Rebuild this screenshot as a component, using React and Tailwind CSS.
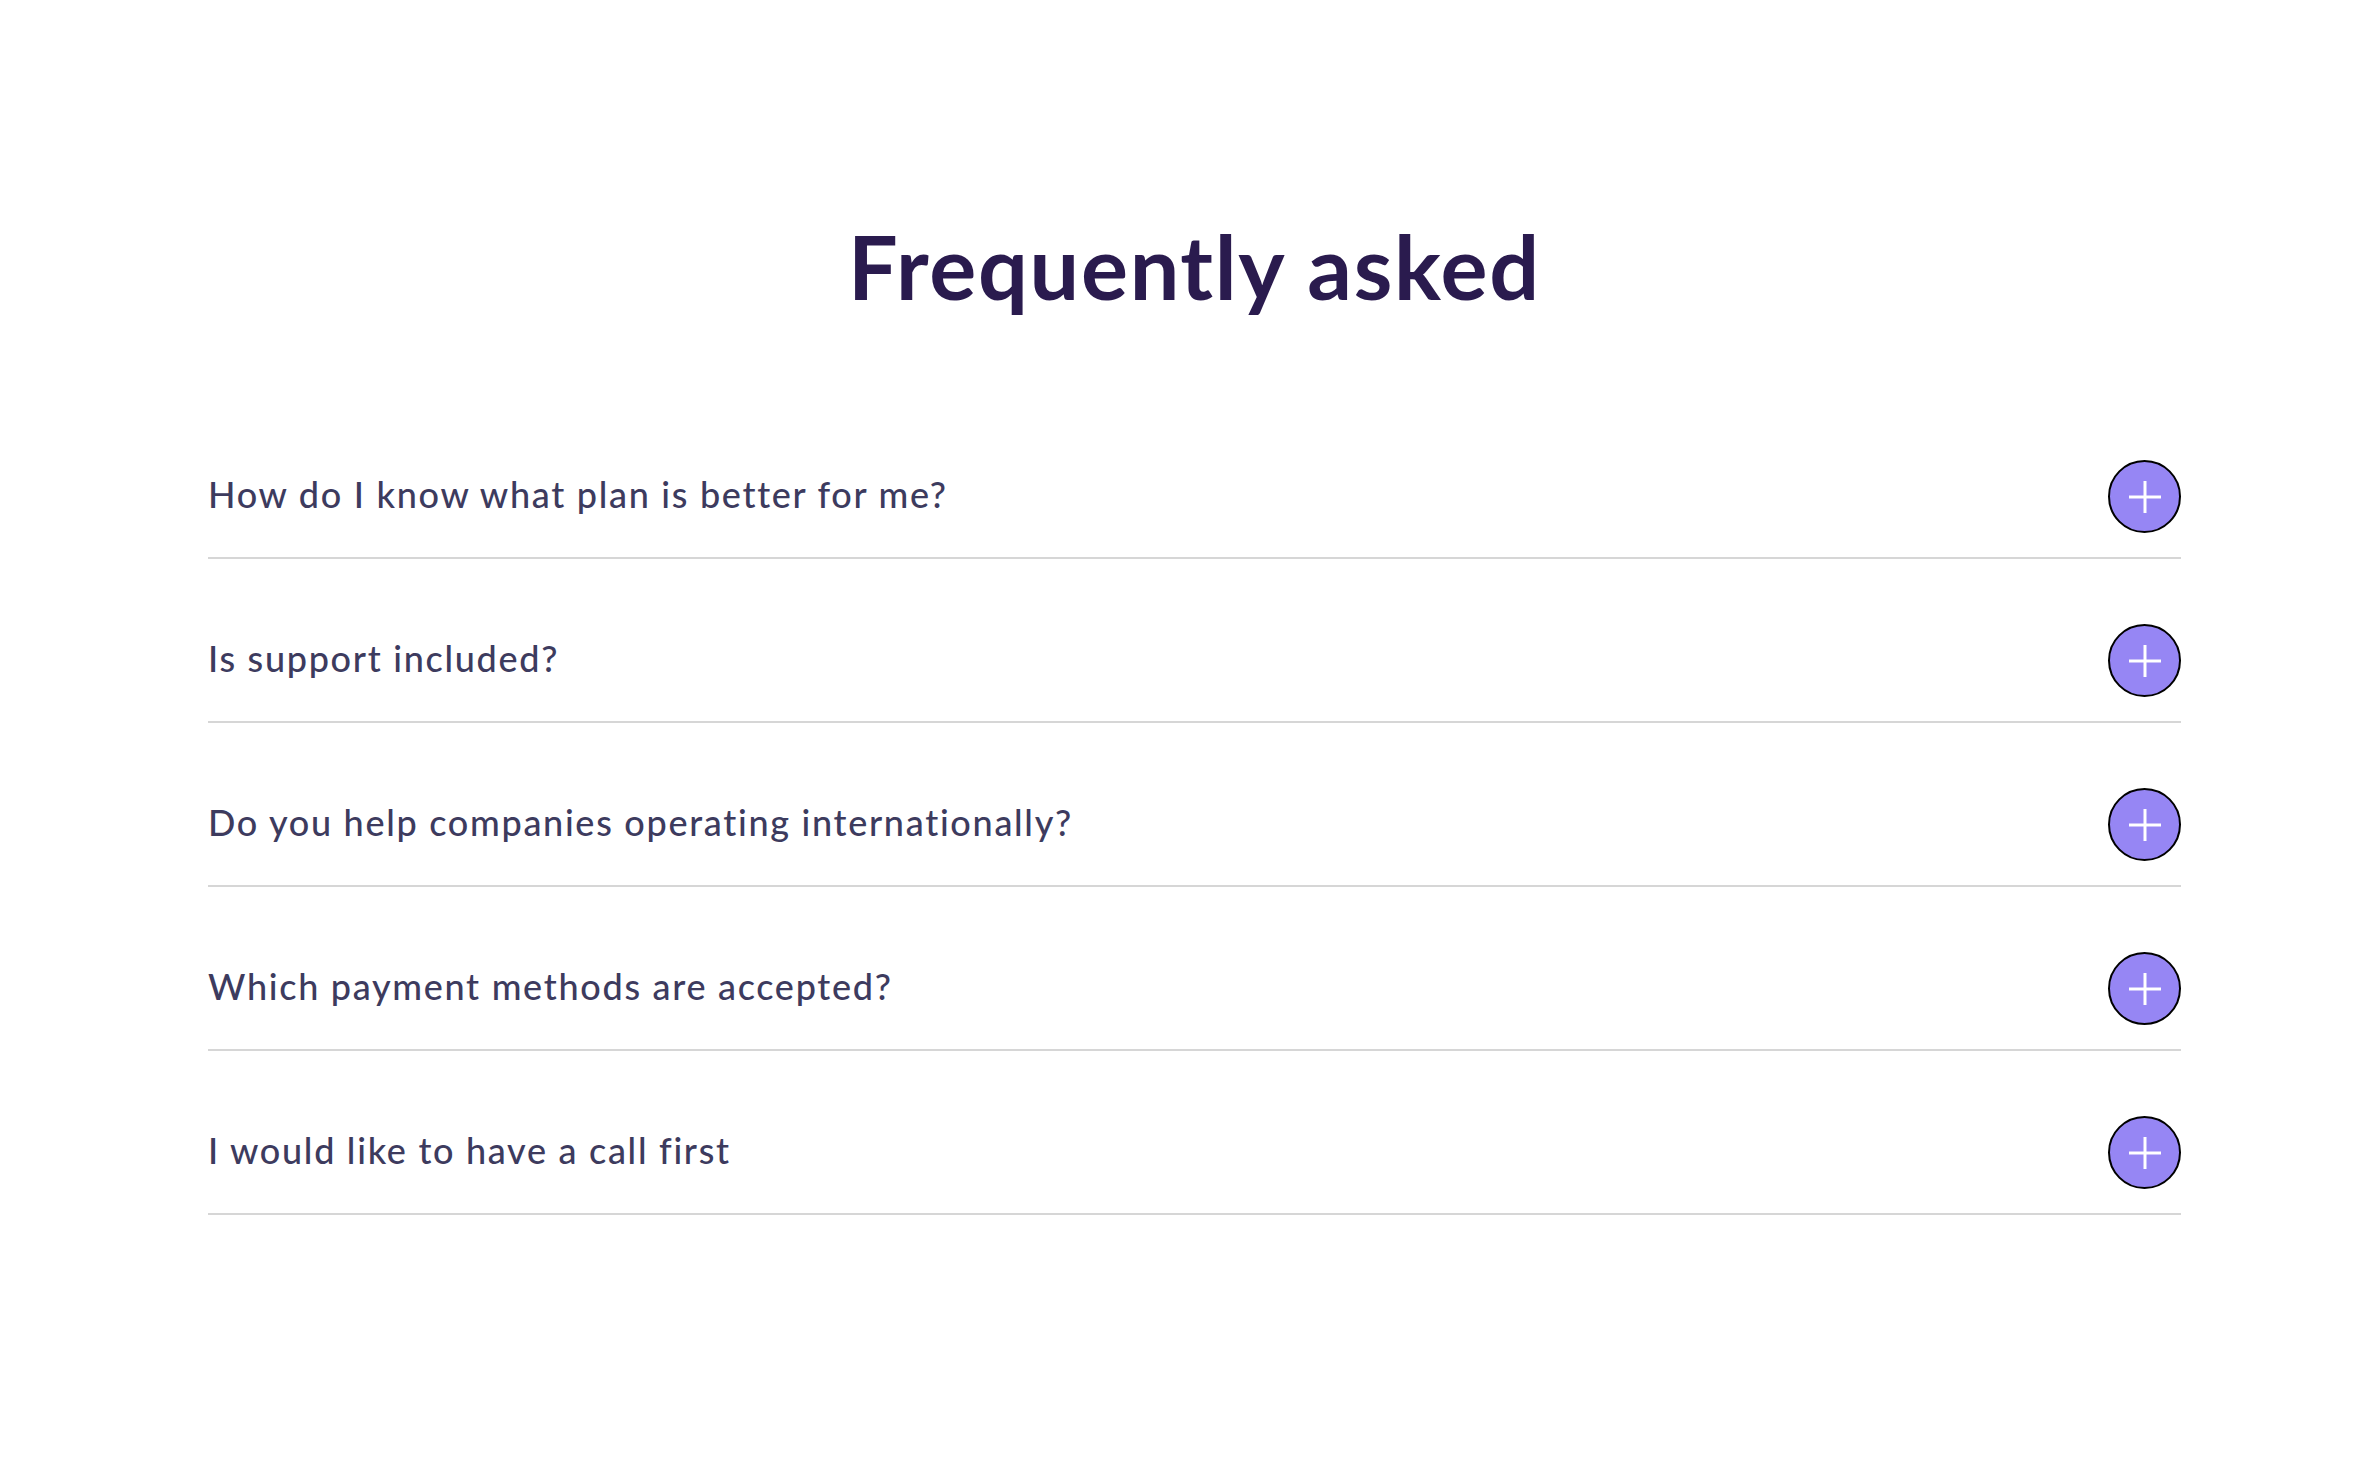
import React from "react";

const questions = [
  "How do I know what plan is better for me?",
  "Is support included?",
  "Do you help companies operating internationally?",
  "Which payment methods are accepted?",
  "I would like to have a call first",
];

function PlusButton() {
  return (
    <div className="flex h-[73px] w-[73px] shrink-0 items-center justify-center rounded-full border-2 border-black bg-[#9686f4]">
      <svg width="34" height="34" viewBox="0 0 34 34" fill="none">
        <line x1="17" y1="1" x2="17" y2="33" stroke="white" strokeWidth="3" />
        <line x1="1" y1="17" x2="33" y2="17" stroke="white" strokeWidth="3" />
      </svg>
    </div>
  );
}

export default function App() {
  return (
    <div
      className="min-h-screen bg-white pl-[208px] pr-[187px] pt-[222px]"
      style={{ fontFamily: "Lato, 'Open Sans', sans-serif" }}
    >
      <h2 className="text-center text-[88px] font-bold leading-none tracking-[1.7px] text-[#2a1b4e]">
        Frequently asked
      </h2>
      <div className="mt-[85px]">
        {questions.map((q) => (
          <div
            key={q}
            className="flex items-center justify-between border-b-2 border-[#d6d6d6] pb-[24px] pt-[65px]"
          >
            <span className="pb-[5px] text-[36px] font-medium leading-none tracking-[1.7px] text-[#3d3b5e]">
              {q}
            </span>
            <PlusButton />
          </div>
        ))}
      </div>
    </div>
  );
}
